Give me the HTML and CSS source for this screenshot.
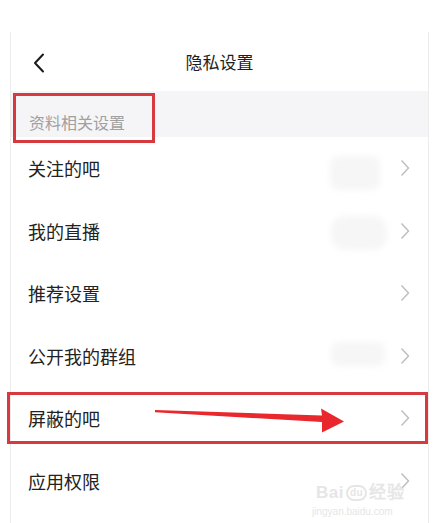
FILE: index.html
```html
<!DOCTYPE html>
<html lang="zh-CN">
<head>
<meta charset="utf-8">
<title>隐私设置</title>
<link rel="stylesheet" href="styles.css">
</head>
<body>
<div class="page">
  <div class="frame">
    <header class="nav">
      <svg class="back" width="12" height="20" viewBox="0 0 12 20"><path d="M10 1.5 L2 10 L10 18.5" fill="none" stroke="#1a1a1a" stroke-width="2" stroke-linecap="round" stroke-linejoin="round"/></svg>
      <h1 class="title">隐私设置</h1>
    </header>
    <div class="section">资料相关设置</div>
    <ul class="list">
      <li class="row"><span class="label">关注的吧</span><svg class="chev" width="10" height="18" viewBox="0 0 10 18"><path d="M1.5 1.5 L8.5 9 L1.5 16.5" fill="none" stroke="#bdbdbd" stroke-width="1.4"/></svg></li>
      <li class="row"><span class="label">我的直播</span><svg class="chev" width="10" height="18" viewBox="0 0 10 18"><path d="M1.5 1.5 L8.5 9 L1.5 16.5" fill="none" stroke="#bdbdbd" stroke-width="1.4"/></svg></li>
      <li class="row"><span class="label">推荐设置</span><svg class="chev" width="10" height="18" viewBox="0 0 10 18"><path d="M1.5 1.5 L8.5 9 L1.5 16.5" fill="none" stroke="#bdbdbd" stroke-width="1.4"/></svg></li>
      <li class="row"><span class="label">公开我的群组</span><svg class="chev" width="10" height="18" viewBox="0 0 10 18"><path d="M1.5 1.5 L8.5 9 L1.5 16.5" fill="none" stroke="#bdbdbd" stroke-width="1.4"/></svg></li>
      <li class="row"><span class="label">屏蔽的吧</span><svg class="chev" width="10" height="18" viewBox="0 0 10 18"><path d="M1.5 1.5 L8.5 9 L1.5 16.5" fill="none" stroke="#bdbdbd" stroke-width="1.4"/></svg></li>
      <li class="row"><span class="label">应用权限</span><svg class="chev" width="10" height="18" viewBox="0 0 10 18"><path d="M1.5 1.5 L8.5 9 L1.5 16.5" fill="none" stroke="#bdbdbd" stroke-width="1.4"/></svg></li>
    </ul>
  </div>

  <div class="blob blob-1"></div>
  <div class="blob blob-2"></div>
  <div class="blob blob-4"></div>

  <div class="mark mark-section"></div>
  <div class="mark mark-row"></div>
  <svg class="arrow" width="434" height="523" viewBox="0 0 434 523">
    <polygon points="155,410 322,415.5 321,408.5 344,421.5 322,432.5 322,422 155,412.2" fill="#e8282c"/>
  </svg>

  <div class="watermark">
    <div class="wm-logo">Bai<span class="wm-du">du</span>经验</div>
    <div class="wm-url">jingyan.baidu.com</div>
  </div>
</div>
</body>
</html>
```

FILE: styles.css
```css
* { box-sizing: border-box; }
html, body { margin: 0; padding: 0; background: #fff; }
body {
  font-family: "Noto Sans CJK SC", "Noto Sans", sans-serif;
  color: #222;
  width: 434px;
  height: 523px;
  overflow: hidden;
}
.page {
  position: relative;
  width: 434px;
  height: 523px;
  padding-top: 32px;
}
.frame {
  margin-left: 10px;
  width: 419px;
  height: 491px;
  border-left: 1px solid #ececec;
  border-right: 1px solid #ececec;
  display: flex;
  flex-direction: column;
}
.nav {
  height: 59px;
  display: flex;
  align-items: center;
  position: relative;
  padding-left: 22px;
}
.back { display: block; margin-top: 2px; }
.title {
  margin: 0;
  font-size: 17px;
  font-weight: 400;
  color: #1e1e1e;
  flex: 1;
  text-align: center;
  padding-right: 34px;
  line-height: 22px;
}
.section {
  height: 46px;
  background: #f5f5f7;
  padding: 20px 0 0 18px;
  font-size: 16px;
  line-height: 22px;
  color: #a0a0a0;
}
.list {
  list-style: none;
  margin: 0;
  padding: 0;
}
.row {
  height: 62.5px;
  display: flex;
  align-items: center;
  justify-content: space-between;
  padding: 0 18px 0 17px;
}
.label {
  font-size: 18px;
  line-height: 24px;
  color: #222;
}
.chev { display: block; }

.blob {
  position: absolute;
  background: #f6f6f6;
  filter: blur(3px);
  border-radius: 8px;
}
.blob-1 { left: 330px; top: 156px; width: 50px; height: 34px; }
.blob-2 { left: 331px; top: 216px; width: 56px; height: 34px; border-radius: 14px; }
.blob-4 { left: 331px; top: 342px; width: 54px; height: 24px; }

.mark {
  position: absolute;
  border: 3px solid #d63a3e;
}
.mark-section { left: 13px; top: 93px; width: 142px; height: 50px; }
.mark-row { left: 7px; top: 392px; width: 421px; height: 52px; }

.arrow { position: absolute; left: 0; top: 0; }

.watermark {
  position: absolute;
  left: 316px;
  top: 484px;
  color: #e6e6e6;
  font-family: "Liberation Sans", sans-serif;
}
.wm-logo {
  font-size: 17px;
  font-weight: 700;
  line-height: 18px;
  letter-spacing: 0.5px;
}
.wm-du {
  display: inline-block;
  font-size: 10px;
  border: 2px solid #e6e6e6;
  border-radius: 9px;
  padding: 0 2px;
  line-height: 12px;
  margin: 0 2px;
  vertical-align: 2px;
}
.wm-url {
  font-size: 10px;
  line-height: 14px;
  margin-top: 3px;
  margin-left: -4px;
}
```
